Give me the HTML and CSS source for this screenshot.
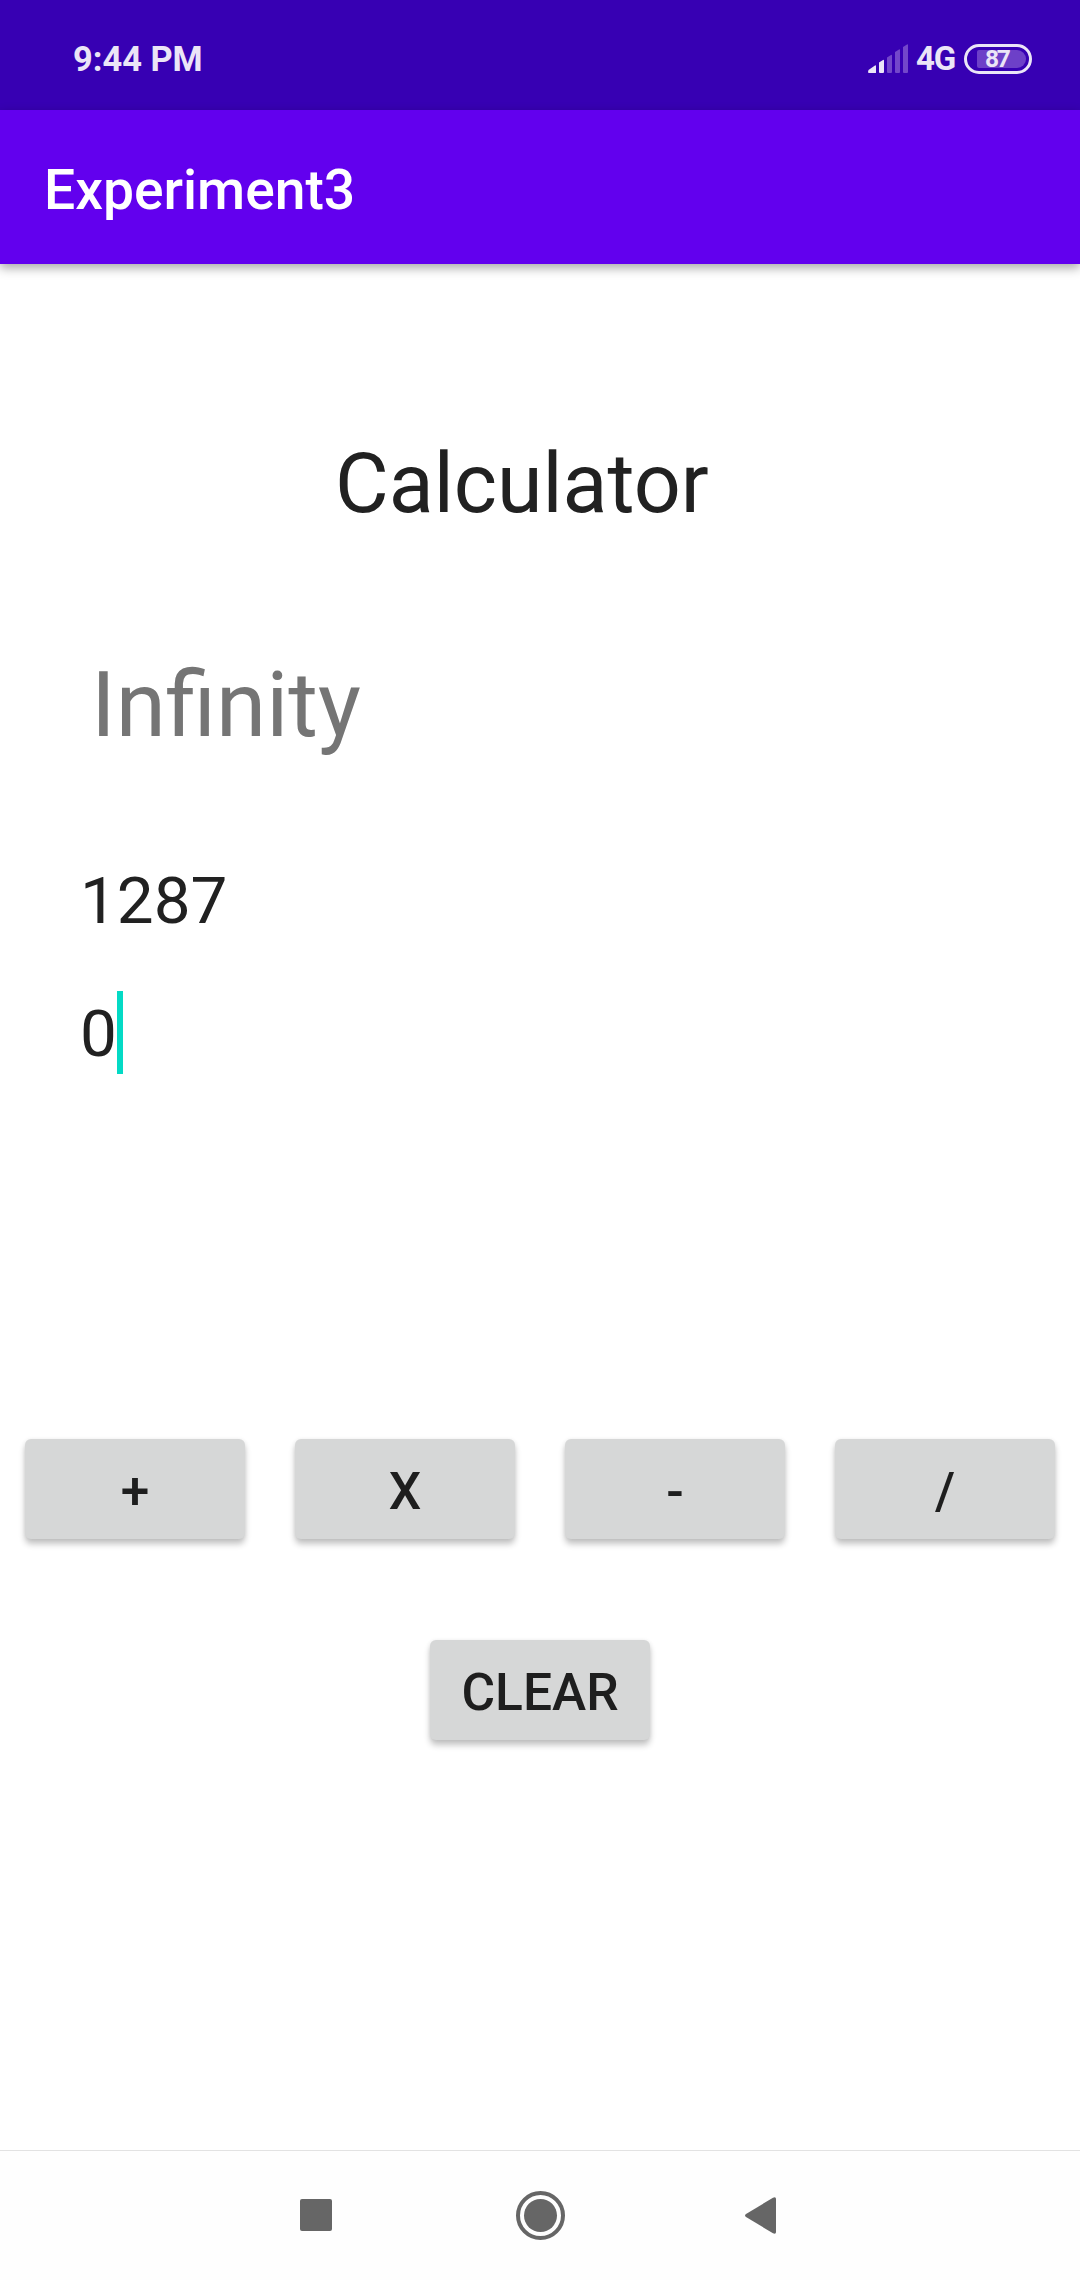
FILE: index.html
```html
<!DOCTYPE html>
<html lang="en">
<head>
<meta charset="utf-8">
<title>Experiment3</title>
<link rel="stylesheet" href="styles.css">
</head>
<body>
<div class="status-bar">
  <span class="clock">9:44 PM</span>
  <div class="status-icons">
    <svg class="signal" width="41" height="30" viewBox="0 0 41 30">
      <path class="on" d="M0.5 26 L7 21.5 Q8 21 8 22 V28.5 Q8 29 7.5 29 H1 Q0 29 0 28 Z"/>
      <path class="on" d="M11 18.5 L15 16 Q16 15.5 16 16.5 V28 Q16 29 15 29 H12 Q11 29 11 28 Z"/>
      <path class="off" d="M19 13.5 L23 11 Q24 10.5 24 11.5 V28 Q24 29 23 29 H20 Q19 29 19 28 Z"/>
      <path class="off" d="M27 8 L31 5.5 Q32 5 32 6 V28 Q32 29 31 29 H28 Q27 29 27 28 Z"/>
      <path class="off" d="M35 3 L39 0.5 Q40 0 40 1 V28 Q40 29 39 29 H36 Q35 29 35 28 Z"/>
    </svg>
    <span class="network">4G</span>
    <div class="battery"><div class="battery-level">87</div></div>
  </div>
</div>
<header class="app-bar">Experiment3</header>
<main class="content">
  <h1 class="title">Calculator</h1>
  <div class="result">Infinity</div>
  <div class="field">1287</div>
  <div class="field">0<span class="caret"></span></div>
  <div class="operators">
    <button class="key">+</button>
    <button class="key">X</button>
    <button class="key">-</button>
    <button class="key">/</button>
  </div>
  <button class="key clear">CLEAR</button>
</main>
<nav class="nav-bar">
  <svg class="recents" width="32" height="32" viewBox="0 0 32 32"><rect width="32" height="32" rx="2"/></svg>
  <svg class="home" width="49" height="49" viewBox="0 0 49 49"><circle class="ring" cx="24.5" cy="24.5" r="22.5"/><circle cx="24.5" cy="24.5" r="16.5"/></svg>
  <svg class="back" width="31" height="37" viewBox="0 0 31 37"><path d="M1 17 L28 0.7 Q31 -0.5 31 2 V35 Q31 37.5 28 36.3 L1 20 Q-1 18.5 1 17 Z"/></svg>
</nav>
</body>
</html>
```
FILE: styles.css
```css
* {
  box-sizing: border-box;
}

body {
  margin: 0;
  width: 1080px;
  height: 2280px;
  display: flex;
  flex-direction: column;
  background: #fff;
  color: #212121;
  font-family: Roboto, sans-serif;
  overflow: hidden;
}

.status-bar {
  height: 110px;
  flex: none;
  display: flex;
  justify-content: space-between;
  align-items: center;
  padding: 7px 48px 0 73px;
  background: #3700b3;
  color: #ebe5f7;
}

.clock {
  font-size: 34.4px;
  line-height: 40px;
  font-weight: 700;
}

.status-icons {
  display: flex;
  align-items: center;
}

.signal {
  margin-right: 7px;
}

.signal .on {
  fill: #ebe5f7;
}

.signal .off {
  fill: #7347ca;
}

.network {
  width: 48px;
  font-size: 33px;
  line-height: 36px;
  font-weight: 700;
  letter-spacing: -1.2px;
}

.battery {
  width: 68px;
  height: 30px;
  padding: 3px 3px 3px 10px;
  border: 3px solid #ebe5f7;
  border-radius: 15px;
}

.battery-level {
  width: 49px;
  height: 18px;
  padding-left: 8px;
  border-radius: 2px 9px 9px 2px;
  background: #6d40c8;
  font-size: 24.5px;
  line-height: 18px;
  font-weight: 700;
  letter-spacing: -2.4px;
}

.app-bar {
  height: 154px;
  flex: none;
  padding: 6px 44px 0;
  background: #6200ee;
  box-shadow: 0 4px 10px rgba(0, 0, 0, 0.34);
  color: #fff;
  font-size: 55.2px;
  line-height: 148px;
  font-weight: 500;
}

.content {
  flex: 1;
  display: flex;
  flex-direction: column;
  padding-top: 165px;
}

.title {
  margin: 0 0 111px 335px;
  font-size: 82.6px;
  line-height: 110px;
  font-weight: 400;
}

.result {
  margin: 0 0 98px 91px;
  color: #757575;
  font-size: 90.75px;
  line-height: 110px;
}

.field {
  display: flex;
  align-items: center;
  height: 83px;
  margin: 0 0 50px 80px;
  padding-top: 2px;
  font-size: 65.6px;
  line-height: 83px;
}

.caret {
  width: 6px;
  height: 83px;
  margin-bottom: 2px;
  background: #03dac5;
}

.operators {
  display: flex;
  justify-content: space-between;
  margin-top: 315px;
  padding: 0 25px;
}

.key {
  width: 220px;
  height: 100px;
  padding: 6px 0 0;
  border: 0;
  border-radius: 6px;
  background: #d6d7d7;
  box-shadow: 0 5px 6px rgba(0, 0, 0, 0.24), 0 0 4px rgba(0, 0, 0, 0.06);
  color: #1e1e1e;
  font: 500 51.5px/94px Roboto, sans-serif;
}

.clear {
  align-self: center;
  margin-top: 101px;
}

.nav-bar {
  height: 130px;
  flex: none;
  display: flex;
  align-items: center;
  padding: 0 304px 0 300px;
  justify-content: space-between;
  border-top: 1px solid #e2e2e2;
  background: #fefefe;
  fill: #666;
}

.recents {
  margin-bottom: 1px;
}

.home {
  margin-left: 4px;
}

.home .ring {
  fill: none;
  stroke: #666;
  stroke-width: 4;
}
```
